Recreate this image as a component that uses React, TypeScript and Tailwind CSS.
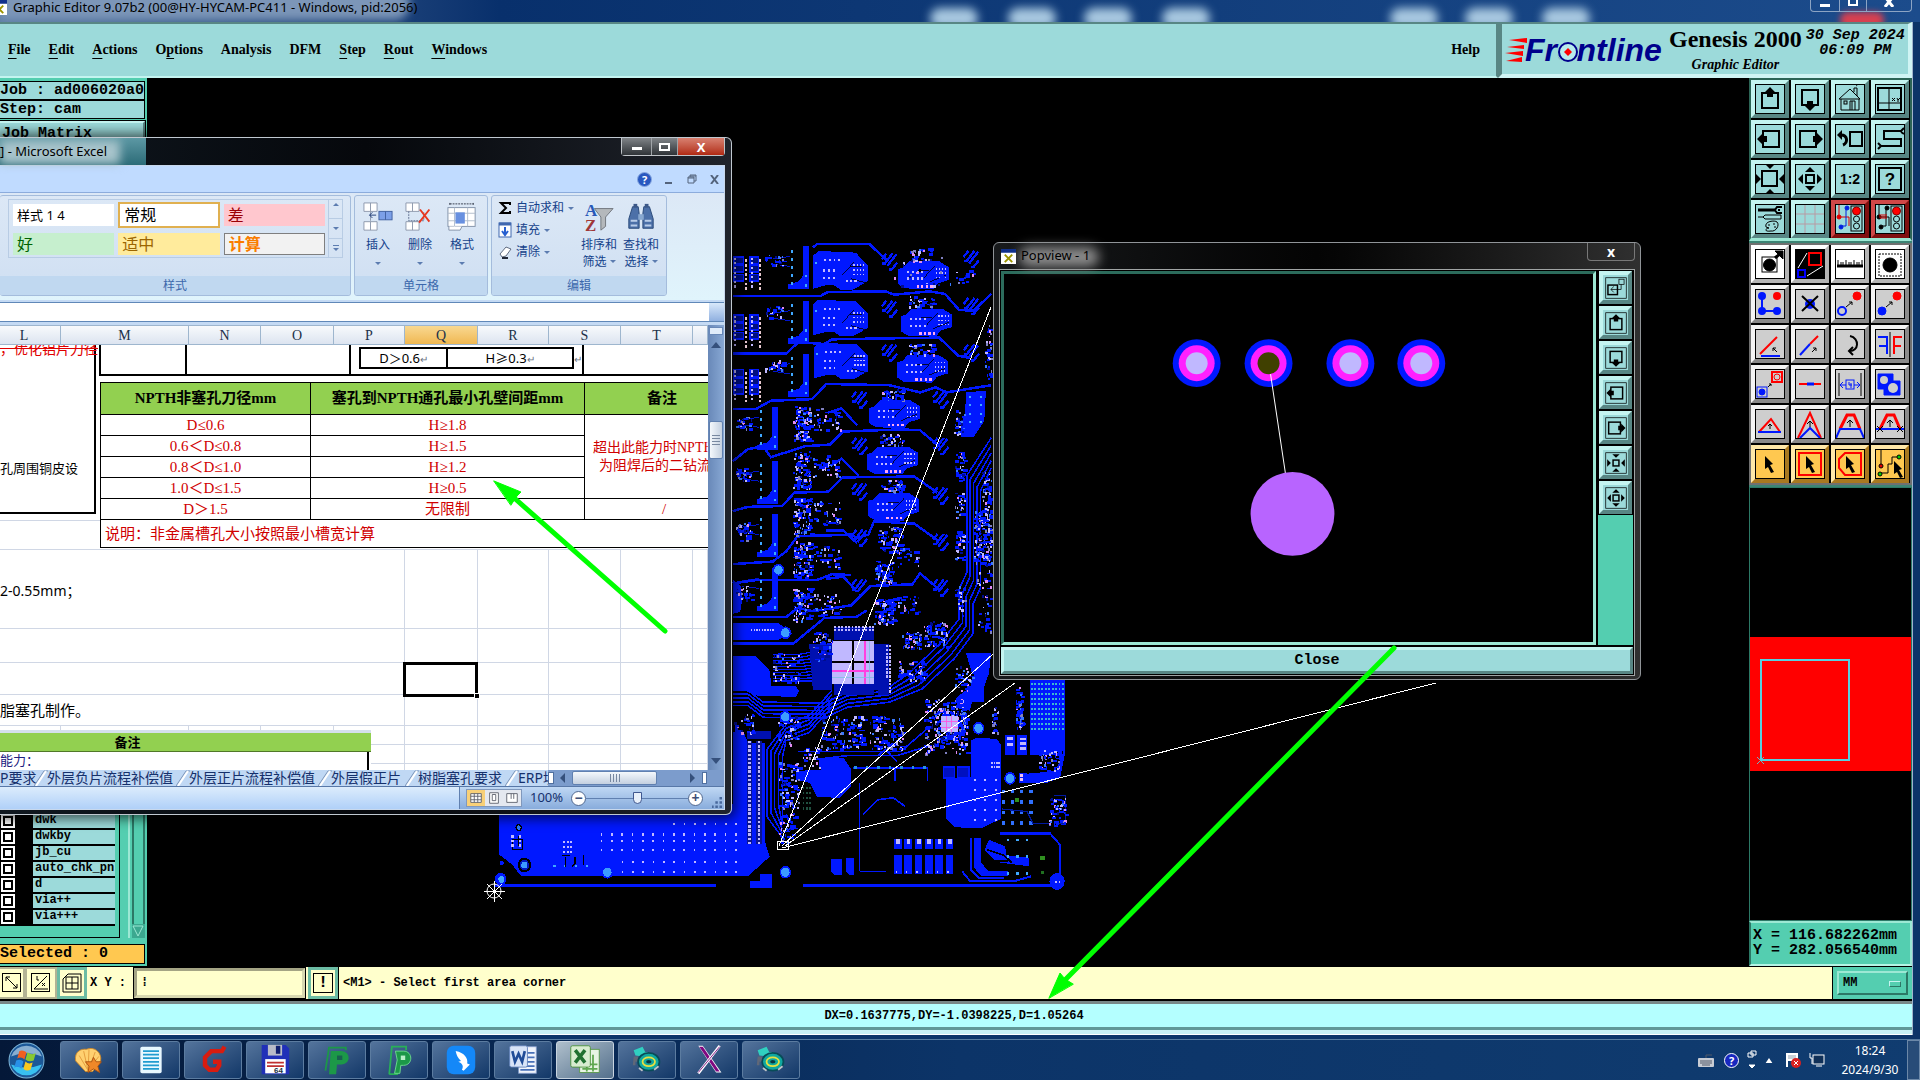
import { useState, type ReactNode } from 'react'

const mono = "font-['Liberation_Mono','Noto_Sans_CJK_SC',monospace] font-bold"
const serif = "font-['Liberation_Serif','Noto_Sans_CJK_SC',serif]"
const ui = "font-['Noto_Sans','Noto_Sans_CJK_SC',sans-serif]"

const BLUE = '#0018ff'
const LILAC = '#c0b8ff'
const SKY = '#40a8ff'

const raised = 'border-4 border-t-[#c4f4f0] border-l-[#c4f4f0] border-r-[#588684] border-b-[#588684] bg-[#9cdada]'
const raisedGray = 'border-4 border-t-[#f4f4f4] border-l-[#f4f4f4] border-r-[#8a8a8a] border-b-[#8a8a8a] bg-[#cecece]'
const raisedWhite = 'border-4 border-t-white border-l-white border-r-[#b4b4b4] border-b-[#b4b4b4] bg-white'
const raisedRed = 'border-4 border-t-[#d04848] border-l-[#d04848] border-r-[#801010] border-b-[#801010] bg-[#9cdada]'
const raisedGold = 'border-4 border-t-[#ffe8a8] border-l-[#ffe8a8] border-r-[#a87820] border-b-[#a87820] bg-[#ffc850]'

/* ---------- toolbar ---------- */

const UP = '0,-6 6,0 3,0 3,4 -3,4 -3,0 -6,0'
const TIP = '0,-4 5,1 -5,1'

function Arrow({ x, y, r = 0, tip }: { x: number; y: number; r?: number; tip?: boolean }) {
  return <polygon points={tip ? TIP : UP} transform={`translate(${x} ${y}) rotate(${r})`} fill="#000" stroke="none" />
}

function Pointer({ x, y }: { x: number; y: number }) {
  return <polygon points="0,0 8,8 5,9 9,16 6,17 3,11 0,13" transform={`translate(${x} ${y})`} fill="#000" stroke="none" />
}

function TrafficLight({ lamp, dot }: { lamp: string; dot: string }) {
  return (
    <>
      <path d="M4 0V13M4 13H14M14 13V22" stroke={lamp} />
      <path d="M11 5V22H7" stroke={dot} />
      <circle cx="12" cy="4" r="2" fill={dot} stroke={dot} /><circle cx="6" cy="23" r="2" fill={dot} stroke={dot} />
      <circle cx="4" cy="13" r="2" fill={lamp} stroke={lamp} />
      <rect x="16" y="2" width="11" height="25" />
      <circle cx="21.500" cy="7" r="4" fill="#f00" stroke="#800" /><circle cx="21.500" cy="15" r="3" /><circle cx="21.500" cy="22" r="3" />
    </>
  )
}

const tools: [string, string, ReactNode][] = [
  ['Pan up', raised, <><rect x="7" y="9" width="16" height="15" strokeWidth="2" /><Arrow x={15} y={9} /></>],
  ['Pan down', raised, <><rect x="7" y="6" width="16" height="15" strokeWidth="2" /><Arrow x={15} y={21} r={180} /></>],
  ['Home', raised, <><path d="M4 15 15 5 25 15ZM6 15V26H24V15M19 8V4H22V12M15 26V17H20V26M17 17V26" /><rect x="9" y="17" width="3" height="3" /><path d="M21 2 24 0" strokeDasharray="1 1" /></>],
  ['Layout', raised, <><rect x="3" y="4" width="23" height="22" strokeWidth="2" /><path d="M14 4V26M3 19H26M17 14 20 17M20 14 17 17M22 14 23 16 25 14M23 16V18" /></>],
  ['Pan left', raised, <><rect x="8" y="7" width="16" height="16" strokeWidth="2" /><Arrow x={8} y={15} r={-90} /></>],
  ['Pan right', raised, <><rect x="5" y="7" width="16" height="16" strokeWidth="2" /><Arrow x={22} y={15} r={90} /></>],
  ['Previous view', raised, <><rect x="15" y="8" width="12" height="14" strokeWidth="2" /><path d="M6 11C13 11 13 19 8 21" strokeWidth="3" /><Arrow x={6} y={11} r={-90} tip /></>],
  ['Serpentine', raised, <path d="M27 7H9V15H26V22H6M26 7 29 4M26 8 29 10M6 22 3 19M6 22 3 25" strokeWidth="2" />],
  ['Zoom in', raised, <><rect x="7" y="7" width="15" height="15" strokeWidth="2" /><Arrow x={15} y={1} r={180} tip /><Arrow x={15} y={29} tip /><Arrow x={2} y={15} r={90} tip /><Arrow x={28} y={15} r={-90} tip /></>],
  ['Zoom out', raised, <><rect x="11" y="11" width="8" height="8" strokeWidth="2" /><Arrow x={15} y={7} tip /><Arrow x={15} y={23} r={180} tip /><Arrow x={7} y={15} r={-90} tip /><Arrow x={23} y={15} r={90} tip /></>],
  ['Scale', raised, <text x="15" y="20" textAnchor="middle" fontSize="14" fontFamily="Liberation Sans" fontWeight="bold" fill="#000" stroke="none">1:2</text>],
  ['Query', raised, <><rect x="4" y="4" width="22" height="22" strokeWidth="2" /><text x="15" y="21" textAnchor="middle" fontSize="17" fontFamily="Liberation Sans" fontWeight="bold" fill="#000" stroke="none">?</text></>],
  ['Tools', raised, <><path d="M3 6H20" strokeWidth="3" /><path d="M27 3H22L20 6 22 9H27M24 5V7" strokeWidth="2" /><path d="M3 13H8L10 11H26V15H10L8 13" /><path d="M11 23C9 17 20 16 22 18 25 21 21 28 16 27 10 28 9 25 14 24Z" /><path d="M13 21H15M18 20H20M19 23H21" /></>],
  ['Grid', raised, <path d="M10 0V30M20 0V30M0 10H30M0 20H30" stroke="#b89aa4" />],
  ['Layer lights', raisedRed, <TrafficLight lamp="#e00000" dot="#0020e0" />],
  ['Net lights', raisedRed, <><TrafficLight lamp="#000" dot="#000" /><path d="M5 10V14H12M7 10V13M9 10V13M11 10V13" stroke="#e00000" /></>],
  ['Select feature', raisedWhite, <><rect x="7" y="8" width="15" height="15" /><circle cx="14.500" cy="16" r="6" fill="#000" /><path d="M20 9 26 4" strokeWidth="3" /><polygon points="20,2 28,2 28,10" fill="#000" /></>],
  ['Popview', raisedWhite, <><rect width="30" height="30" fill="#000" /><path d="M3 19 12 4M12 27 28 17" stroke="#fff" /><rect x="14" y="4" width="12" height="12" stroke="#f00" strokeWidth="2" /><rect x="3" y="21" width="7" height="7" stroke="#00f" strokeWidth="2" /></>],
  ['Ruler', raisedWhite, <><path d="M2 17H28" strokeWidth="3" /><path d="M3 11V18M6 13V18M8 13V18M11 11V18M14 13V18M16 13V18M19 11V18M22 13V18M24 13V18M27 11V18" /></>],
  ['Pad', raisedWhite, <><rect x="4" y="5" width="22" height="22" strokeDasharray="2 1" /><circle cx="15" cy="16" r="7" fill="#000" /></>],
  ['Net', raisedGray, <g fill={BLUE} stroke={BLUE} strokeWidth="2"><path d="M7 7V22H22" fill="none" /><circle cx="7" cy="7" r="3" /><circle cx="7" cy="22" r="3" /><circle cx="22" cy="22" r="3" /><circle cx="22" cy="7" r="3" fill="#f00" stroke="#f00" /></g>],
  ['Delete', raisedGray, <><circle cx="15" cy="15" r="5" fill={BLUE} stroke="none" /><path d="M7 7 23 22M23 7 7 22" strokeWidth="2" /></>],
  ['Move', raisedGray, <><circle cx="7" cy="22" r="4" stroke={BLUE} strokeWidth="2" /><circle cx="22" cy="7" r="4" fill="#f00" stroke="#f00" /><path d="M11 18 17 13M14 13H17V16" /></>],
  ['Copy', raisedGray, <><circle cx="7" cy="22" r="4" fill={BLUE} stroke={BLUE} /><circle cx="22" cy="7" r="4" fill="#f00" stroke="#f00" /><path d="M11 18 17 13M14 13H17V16" /></>],
  ['Rotate', raisedGray, <><path d="M5 25 22 8" stroke="#f00" strokeWidth="2" /><path d="M6 27H25" stroke={BLUE} strokeWidth="2" /><path d="M22 23 18 19M18 22V19H21" /></>],
  ['Stretch', raisedGray, <><path d="M15 15 23 7" stroke="#f00" strokeWidth="2" /><path d="M5 26 15 15" stroke={BLUE} strokeWidth="2" /><path d="M17 23 21 19M18 19H21V22" /></>],
  ['Turn', raisedGray, <><path d="M15 7C25 9 24 23 14 22" strokeWidth="2" /><path d="M18 18 14 22 18 26" strokeWidth="2" /></>],
  ['Mirror', raisedGray, <><path d="M15 3V28" /><path d="M3 8H12V25M12 17H4" stroke={BLUE} strokeWidth="2" /><path d="M27 8H19V25M19 17H26" stroke="#f00" strokeWidth="2" /></>],
  ['Resize', raisedGray, <><rect x="17" y="3" width="10" height="10" stroke="#f00" strokeWidth="2" /><circle cx="22" cy="8" r="3" stroke="#f00" /><rect x="2" y="18" width="10" height="10" stroke={BLUE} /><circle cx="7" cy="23" r="3" fill={BLUE} stroke={BLUE} /><path d="M13 18 16 15M14 15H16V17" /></>],
  ['Join', raisedGray, <><path d="M4 15H26" stroke="#f00" strokeWidth="2" /><path d="M12 15H19" stroke={BLUE} strokeWidth="3" /></>],
  ['Spacing', raisedGray, <><path d="M4 4V27M26 4V27" /><path d="M5 16H11M19 16H25M8 13 5 16 8 19M22 13 25 16 22 19" stroke={BLUE} /><rect x="11" y="11" width="8" height="9" stroke={BLUE} /><path d="M14 13V16H17M16 14V19" stroke={BLUE} /></>],
  ['Surface', raisedGray, <><path d="M3 5H18V12H25V26H9V20H3Z" fill={BLUE} stroke={BLUE} /><circle cx="9" cy="11" r="4" fill="#cecece" stroke="none" /><circle cx="18" cy="19" r="5" fill="#cecece" stroke="none" /></>],
  ['Chamfer', raisedGray, <><path d="M4 23 16 10 25 23" stroke="#f00" strokeWidth="2" /><path d="M3 23H26" stroke={BLUE} strokeWidth="2" /><path d="M15 20V15M13 17 15 15 17 17" /></>],
  ['Peak', raisedGray, <><path d="M3 29 15 4 26 29" stroke="#f00" strokeWidth="2" /><path d="M5 29 15 19 25 29" stroke={BLUE} strokeWidth="2" /><path d="M15 18V12M12 15 15 12 18 15" /></>],
  ['Trapeze', raisedGray, <><path d="M5 20 12 6H19L25 20" stroke="#f00" strokeWidth="3" /><path d="M1 29 5 20H25L29 29" stroke={BLUE} strokeWidth="2" /><path d="M15 18V11M12 14 15 11 18 14" /></>],
  ['Trapeze cut', raisedGray, <><path d="M5 20 12 6H19L25 20" stroke="#f00" strokeWidth="3" /><path d="M1 20H29" stroke={BLUE} strokeWidth="2" /><path d="M2 17 8 23M8 17 2 23M22 17 28 23M28 17 22 23" /><path d="M15 18V11M12 14 15 11 18 14" /></>],
  ['Pick', raisedGold, <Pointer x={10} y={7} />],
  ['Pick in box', raisedGold, <><rect x="4" y="4" width="22" height="22" stroke="#f00" strokeWidth="2" /><Pointer x={11} y={7} /></>],
  ['Pick in polygon', raisedGold, <><path d="M10 4H26V26H10L4 19V10Z" stroke="#f00" strokeWidth="2" /><Pointer x={11} y={7} /></>],
  ['Pick net', raisedGold, <><path d="M6 0V16M6 24H13V15H17V8H22" /><circle cx="6" cy="17" r="2" fill="#e00000" /><circle cx="5" cy="25" r="2" fill="#0c0" /><circle cx="24" cy="8" r="2" fill="#0c0" /><Pointer x={19} y={12} /></>],
]

function ToolButton({ name, look, children }: { name: string; look: string; children: ReactNode }) {
  return (
    <button aria-label={name} className={`size-[38px] ${look}`}>
      <svg viewBox="0 0 30 30" className="size-[30px]" fill="none" stroke="#000">
        {children}
        <rect x="0.500" y="0.500" width="29" height="29" stroke="#000" />
      </svg>
    </button>
  )
}

function RightPanel() {
  return (
    <aside className="flex w-[163px] shrink-0 flex-col bg-[#3c8474]">
      <div className="grid grid-cols-[repeat(4,38px)] gap-[2px] border-2 border-b-[3px] border-[#2c6456] border-b-[#9ce8d4] bg-black">
        {tools.slice(0, 16).map(([n, look, icon]) => <ToolButton key={n} name={n} look={look}>{icon}</ToolButton>)}
      </div>
      <div className="mt-[2px] grid grid-cols-[repeat(4,38px)] gap-[2px] border-2 border-[#707070] bg-black">
        {tools.slice(16).map(([n, look, icon]) => <ToolButton key={n} name={n} look={look}>{icon}</ToolButton>)}
      </div>
      <div className="mt-[2px] flex min-h-0 flex-1 flex-col border border-[#2c7866] bg-black">
        <div className="flex-1" />
        <div className="h-[134px] bg-[#ff0000] px-[10px] pt-[22px]">
          <div className="h-[102px] w-[90px] border-2 border-[#58d0e0]" />
          <svg viewBox="0 0 8 8" className="-mt-1 -ml-[3px] size-[7px]" stroke="#58d0e0"><path d="M0 0 8 8M8 0 0 8" /></svg>
        </div>
        <div className="flex-1" />
      </div>
      <div className={`h-[45px] border-2 border-t-[#9ce8d4] border-l-[#2c7866] border-r-[#9ce8d4] border-b-[#b4f4e4] bg-[#54ceb0] pt-[5px] pl-[2px] text-[15px] leading-[15px] whitespace-pre ${mono}`}>
        <p>X = 116.682262mm</p>
        <p>Y = 282.056540mm</p>
      </div>
    </aside>
  )
}

/* ---------- board artwork ---------- */

function randomizer(seed: number) {
  let s = seed
  return () => {
    s = (s * 1664525 + 1013904223) % 4294967296
    return s / 4294967296
  }
}

// x, y, width, height, pad count
const clusters: number[][] = [
  [745, 35, 45, 25, 28], [745, 155, 45, 30, 28], [745, 285, 45, 25, 28],
  [1120, 20, 60, 30, 40], [1120, 132, 65, 28, 40], [1120, 245, 65, 28, 40], [1045, 355, 60, 24, 40], [1045, 462, 60, 26, 40], [1045, 570, 60, 28, 40], [1040, 680, 60, 60, 80],
  [818, 392, 45, 85, 110], [818, 500, 45, 90, 110], [818, 612, 45, 90, 110], [818, 715, 45, 85, 110], [818, 825, 45, 80, 100],
  [870, 400, 70, 55, 40], [870, 510, 70, 55, 40], [870, 620, 70, 55, 40], [870, 725, 70, 55, 40], [870, 840, 70, 50, 40],
  [1030, 760, 50, 55, 80], [1030, 850, 50, 62, 90], [1090, 730, 55, 50, 30], [1090, 845, 55, 40, 30],
  [1240, 400, 25, 60, 30], [1240, 500, 25, 70, 40], [1240, 600, 25, 60, 30], [1240, 690, 25, 70, 40], [1240, 820, 25, 70, 30],
  [1290, 640, 46, 130, 190], [1310, 550, 26, 90, 50], [1300, 780, 35, 150, 50], [1320, 200, 16, 130, 40], [1240, 70, 50, 30, 14],
  [668, 415, 40, 35, 30], [668, 540, 40, 35, 30], [668, 670, 40, 45, 34], [668, 820, 40, 35, 30], [665, 1120, 50, 50, 34],
  [870, 930, 50, 70, 60], [1100, 930, 50, 40, 60], [1160, 905, 60, 60, 80], [1090, 1000, 70, 45, 70], [765, 980, 70, 70, 50],
  [890, 1130, 110, 80, 130], [1015, 1130, 90, 80, 120], [1160, 1090, 110, 130, 190], [1185, 1110, 85, 75, 190],
  [780, 1130, 50, 70, 50], [780, 1240, 50, 110, 100], [780, 1360, 40, 70, 50], [1400, 1060, 16, 100, 50], [1335, 1100, 16, 70, 20],
  [1460, 1210, 60, 50, 50], [1485, 1320, 45, 70, 60], [1240, 1010, 50, 60, 40], [1080, 30, 150, 80, 20], [840, 1205, 50, 50, 30],
]

function Specks() {
  const rnd = randomizer(41)
  const tint = [BLUE, BLUE, BLUE, BLUE, '#000c90', '#000', LILAC, LILAC, '#3878ff', '#e08cf0', '#8080c0', BLUE]
  return (
    <>
      {clusters.flatMap(([x, y, w, h, n], c) =>
        Array.from({ length: n }, (_, i) => {
          const fill = tint[Math.floor(rnd() * tint.length)]
          const long = fill === BLUE ? 12 : 4
          return (
            <rect
              key={`${c}-${i}`}
              x={Math.round(x + rnd() * w)}
              y={Math.round(y + rnd() * h)}
              width={3 + Math.round(rnd() * long)}
              height={4 + Math.round(rnd() * 3)}
              fill={fill}
            />
          )
        }),
      )}
    </>
  )
}

function Dots({ x, y, cols, rows, dx, dy, s = 5, fill = LILAC }: { x: number; y: number; cols: number; rows: number; dx: number; dy: number; s?: number; fill?: string }) {
  return (
    <>
      {Array.from({ length: cols * rows }, (_, i) => (
        <rect key={i} x={x + (i % cols) * dx} y={y + Math.floor(i / cols) * dy} width={s} height={s} fill={fill} />
      ))}
    </>
  )
}

function PourA({ x, y, sy = 1 }: { x: number; y: number; sy?: number }) {
  return (
    <g transform={`translate(${x} ${y}) scale(1 ${sy})`}>
      <polygon points="0,12 14,0 112,4 143,34 143,72 105,92 72,92 56,82 32,82 0,90" fill={BLUE} />
      <path d="M76 58 108 26M100 66 140 76M96 38H128" stroke="#000" strokeWidth="2" fill="none" />
      <Dots x={30} y={20} cols={4} rows={1} dx={12} dy={10} />
      <Dots x={26} y={44} cols={3} rows={2} dx={13} dy={18} />
      <Dots x={106} y={32} cols={4} rows={3} dx={8} dy={11} s={4} />
      <Dots x={86} y={68} cols={3} rows={1} dx={11} dy={9} s={6} />
      <rect x="5" y="26" width="6" height="6" fill={SKY} />
    </g>
  )
}

function PourB({ x, y }: { x: number; y: number }) {
  return (
    <g transform={`translate(${x} ${y})`}>
      <polygon points="0,20 14,16 28,2 108,2 133,16 133,46 104,54 92,68 18,66 0,56" fill={BLUE} />
      <path d="M66 42 96 12M84 50 126 34M52 24H80" stroke="#000" strokeWidth="2" fill="none" />
      <Dots x={24} y={24} cols={4} rows={2} dx={12} dy={16} />
      <Dots x={98} y={18} cols={4} rows={3} dx={8} dy={10} s={4} />
      <Dots x={48} y={58} cols={4} rows={1} dx={12} dy={9} s={6} fill="#ffa8f0" />
    </g>
  )
}

function Tower({ x, y }: { x: number; y: number }) {
  return (
    <g transform={`translate(${x} ${y})`}>
      <polygon points="38,0 54,0 54,102 0,102 0,90 26,84 38,70" fill={BLUE} />
      <Dots x={6} y={8} cols={1} rows={5} dx={1} dy={19} s={7} fill={SKY} />
      <Dots x={43} y={68} cols={1} rows={2} dx={1} dy={22} s={6} fill={SKY} />
      <path d="M-40 30 4 24M-40 42 4 48" stroke={BLUE} strokeWidth="2" />
    </g>
  )
}

function Whisker({ x, y }: { x: number; y: number }) {
  return (
    <path
      d={`M${x} ${y + 16}l12 -14M${x} ${y + 26}h8l20 -24M${x + 14} ${y + 32}l24 -28M${x + 18} ${y + 40}h8l14 -16`}
      stroke={BLUE}
      strokeWidth="6"
      fill="none"
    />
  )
}

const traces = [
  'M660 133H890L908 124 1035 122H1060L1082 130 1175 122 1215 128 1252 166 1290 168 1336 128',
  'M660 270H800L832 243 900 247 920 236 1110 233 1200 232 1250 275 1280 280',
  'M660 402H720L760 382 868 378 905 342 1070 345 1150 362 1190 350 1220 362 1336 345',
  'M660 526 700 497 740 490 760 516 850 490 915 486 948 455 1100 450 1150 452 1205 494',
  'M660 644 700 634 790 632 822 600 910 598 948 564 1135 562 1195 600',
  'M660 770 765 764 800 740 830 704 970 700 985 708 1015 700 1030 668 1135 674 1200 716',
  'M660 816 720 808 880 808 920 794 970 796M660 896H800L830 874 870 882 970 868 1020 822 1130 818 1150 792 1200 830',
  'M660 958H820L900 898 985 895 1010 880',
  'M870 18 880 10H1018L1065 50M910 410 945 400 985 440M910 540 945 520 990 560M905 690 950 690 985 720M905 805 950 800 985 836',
]

function Board() {
  return (
    <svg viewBox="0 0 1568 1568" preserveAspectRatio="none" className="absolute top-[162px] left-[333px] h-[660px] w-[600px]" shapeRendering="crispEdges">
      {traces.map((d) => <path key={d} d={d} stroke={BLUE} strokeWidth="6" fill="none" />)}
      {[0, 9, 18, 27, 36].map((o) => (
        <path
          key={o}
          d={`M1336 ${470 + o * 2} ${1272 + o} ${560 + o}V${790 + o}L${1252 + o} ${830 + o}V${900 + o}L${1202 + o} ${960 + o} ${1120 + o} ${1030 + o} 1070 ${1062 + o} 960 ${1074 + o} 900 ${1100 + o} 740 ${1098 + o} 700 ${1070 + o} 660 ${1070 + o}`}
          stroke={BLUE}
          strokeWidth="4"
          fill="none"
        />
      ))}
      {[0, 10, 20, 30, 40].map((o) => (
        <path key={o} d={`M920 ${1070 + o} 860 ${1130 + o} 800 ${1150 + o} ${750 + o} ${1210 + o / 2}V${1370 - o}L790 ${1420 - o}`} stroke={BLUE} strokeWidth="4" fill="none" />
      ))}
      <path d="M830 1215H1100L1170 1160M870 1235 960 1225H1090L1180 1200M1040 1225 1060 1210 1090 1240M975 1254H1170M1085 1254V1285M1170 1254V1285M992 1290V1500M1000 1365 1040 1330 1080 1325 1110 1345M992 1500 1060 1500" stroke={BLUE} strokeWidth="4" fill="none" />

      {[40, 178, 308].map((y) => (
        <g key={y}>
          {[0, 20, 42].map((dy) => <path key={dy} d={`M664 ${y + dy}h24v16h-24zM706 ${y + dy}h22v16h-22z`} fill="#001080" stroke={BLUE} strokeWidth="4" />)}
          <Dots x={664} y={y + 2} cols={2} rows={7} dx={44} dy={11} />
          <Dots x={692} y={y + 6} cols={2} rows={7} dx={36} dy={11} s={6} fill="#e8c8d0" />
        </g>
      ))}

      <Tower x={806} y={15} /><Tower x={806} y={144} /><Tower x={806} y={270} />
      <Tower x={725} y={397} /><Tower x={725} y={525} /><Tower x={725} y={652} /><Tower x={725} y={780} />
      <PourA x={870} y={26} /><PourA x={870} y={142} sy={0.94} /><PourA x={872} y={244} sy={0.94} />
      <PourB x={1093} y={49} /><PourB x={1100} y={161} /><PourB x={1090} y={271} /><PourB x={1017} y={379} /><PourB x={1011} y={489} /><PourB x={1014} y={600} />

      {[30, 142, 246].map((y) => <Whisker key={y} x={1050} y={y} />)}
      {[24, 136, 246].map((y) => <Whisker key={y} x={1264} y={y} />)}
      {[358, 468, 576, 686, 804].map((y) => <Whisker key={y} x={972} y={y} />)}
      {[358, 468, 586, 696, 804].map((y) => <Whisker key={y} x={1184} y={y} />)}

      <polygon points="1270,362 1322,358 1318,430 1290,468 1256,468 1258,440 1268,410" fill={BLUE} />
      <Dots x={1278} y={370} cols={2} rows={4} dx={28} dy={20} fill={SKY} />
      <polygon points="660,910 780,910 815,935 780,950 660,950" fill={BLUE} />
      <Dots x={708} y={924} cols={9} rows={1} dx={7} dy={7} s={4} />
      <polygon points="660,988 720,988 756,1020 762,1060 826,1060 834,1072 826,1086 720,1082 690,1070 660,1070" fill={BLUE} />
      <polygon points="660,806 680,820 686,850 680,884 660,888" fill={BLUE} />

      {/* main processor */}
      {[0, 1, 2, 3, 4, 5, 6, 7, 8, 9].map((i) => <path key={i} d={`M765 ${985 + i * 7}H${830 + i * 3}L${890} ${975 + i * 8}H920`} stroke={BLUE} strokeWidth="3" fill="none" />)}
      <path d="M860 960H920V1070H870ZM925 920H1030V950H925ZM1030 960H1070V1070H1030ZM925 1055H1030V1080H925Z" fill="#0010b0" />
      <Dots x={926} y={916} cols={12} rows={2} dx={9} dy={9} />
      <Dots x={1060} y={962} cols={2} rows={13} dx={8} dy={9} s={6} />
      <rect x="921" y="953" width="108" height="102" fill={LILAC} />
      <path d="M974 953V1055M921 1002H1029" stroke="#000" strokeWidth="5" />
      <path d="M1006 953V1055M921 1024H1029" stroke="#ff40e0" strokeWidth="3" />
      <path d="M1018 953V1055M921 1040H1029" stroke="#80c0e0" strokeWidth="2" />
      <rect x="1040" y="1040" width="30" height="40" fill="#0010b0" />

      {/* lower area */}
      <polygon points="50,1340 660,1340 660,1170 690,1170 700,1195 745,1195 745,1430 757,1465 700,1512 108,1512 84,1484 50,1460" fill={BLUE} />
      <path d="M697 1166H760V1186H697Z" fill="#0010b0" />
      <path d="M697 1190H712V1436H697ZM722 1190H737V1436H722Z" fill="#0a1490" />
      <Dots x={701} y={1190} cols={2} rows={25} dx={26} dy={10} s={6} />
      <Dots x={315} y={1410} cols={14} rows={1} dx={27} dy={20} />
      <Dots x={315} y={1426} cols={14} rows={2} dx={27} dy={20} />
      <Dots x={370} y={1475} cols={12} rows={2} dx={27} dy={24} />
      <Dots x={505} y={1384} cols={7} rows={1} dx={27} dy={24} />
      <path d="M86 1424H112V1448H86ZM100 1416V1440" stroke="#000" strokeWidth="3" fill="none" />
      <Dots x={82} y={1414} cols={2} rows={3} dx={20} dy={11} s={6} />
      <Dots x={218} y={1428} cols={3} rows={3} dx={9} dy={12} s={5} />
      <Dots x={192} y={1484} cols={4} rows={1} dx={28} dy={12} s={6} fill={SKY} />
      <path d="M215 1462H235M224 1466V1490M248 1466V1482L240 1488M270 1462V1486" stroke="#000" strokeWidth="4" fill="none" />
      <path d="M40 1533H618M845 1533H1500" stroke={BLUE} strokeWidth="8" />
      <path d="M705 1524H732V1507H763V1540H705Z" fill={BLUE} />

      <polygon points="885,1232 950,1230 970,1258 970,1298 940,1326 880,1322 862,1290 826,1282 826,1262 885,1258" fill={BLUE} />
      <polygon points="1282,1190 1295,1183 1350,1185 1362,1200 1362,1375 1310,1398 1240,1395 1218,1375 1218,1280 1282,1275" fill={BLUE} />
      <Dots x={1290} y={1280} cols={3} rows={5} dx={28} dy={24} />
      <Dots x={1336} y={1240} cols={4} rows={2} dx={6} dy={9} />
      <path d="M1212 1252H1240V1278H1212ZM1248 1252H1278V1278H1248Z" fill="#0010c0" stroke={BLUE} strokeWidth="3" />
      <polygon points="1270,982 1336,980 1330,1030 1318,1060 1318,1098 1286,1098 1280,1118 1244,1112 1244,1088 1284,1060 1286,1030" fill={BLUE} />
      <path d="M1437 1046H1530V1216H1500V1224H1437V1168Z" fill={BLUE} />
      <Dots x={1440} y={1052} cols={10} rows={10} dx={9} dy={12} s={5} fill="#3cb8d0" />
      <path d="M1372 1176H1398V1224H1372ZM1404 1176H1430V1224H1404ZM1408 1266H1430V1290H1408ZM1430 1268 1500 1262 1516 1240V1215H1530L1516 1278 1480 1290H1430Z" fill={BLUE} />
      <Dots x={1378} y={1180} cols={2} rows={2} dx={8} dy={14} s={7} />
      <Dots x={1412} y={1182} cols={2} rows={3} dx={8} dy={11} s={7} />
      <Dots x={1410} y={1268} cols={1} rows={2} dx={8} dy={10} s={8} fill="#f0c0f0" />
      <Dots x={1364} y={1306} cols={4} rows={4} dx={24} dy={25} s={8} fill="#3070ff" />
      <rect x="1398" y="1326" width="11" height="9" fill="#309020" />
      <path d="M1364 1352 1430 1358 1445 1386H1530V1320H1500" stroke="#0018a0" strokeWidth="3" fill="none" />

      {[0, 1, 2, 3, 4, 5].map((i) => (
        <g key={i} transform={`translate(${1082 + i * 27} 1424)`}>
          <rect width="20" height="22" fill={BLUE} /><rect x="6" width="10" height="12" fill={LILAC} />
          <rect y="38" width="20" height="44" fill={BLUE} />
          <rect x="4" y="76" width="4" height="4" fill={LILAC} />
        </g>
      ))}
      <path d="M918 1470H945V1508H925L918 1500ZM956 1468H978V1508H965L956 1500Z" fill={BLUE} />
      <path d="M1283 1420V1496L1305 1516H1370M1360 1410H1490L1515 1436V1510L1500 1533M1260 1500 1280 1522H1400L1440 1512" stroke={BLUE} strokeWidth="5" fill="none" />
      <path d="M1290 1420V1490L1310 1512H1380V1500H1330L1310 1480V1420ZM1330 1425 1372 1440 1376 1462 1436 1468V1488L1350 1478 1318 1450Z" fill={BLUE} />
      <path d="M1324 1448 1370 1462 1390 1480M1320 1476H1380" stroke="#000" strokeWidth="4" fill="none" />
      <circle cx="1508" cy="1524" r="20" fill={BLUE} />
      <Dots x={1503} y={1522} cols={2} rows={1} dx={9} dy={8} />
      <rect x="1463" y="1463" width="14" height="10" fill="#309020" /><rect x="1465" y="1500" width="8" height="7" fill="#207020" />
      <Dots x={1376} y={1422} cols={3} rows={3} dx={25} dy={40} s={7} fill={SKY} />
      <Dots x={843} y={1300} cols={3} rows={5} dx={9} dy={12} s={5} fill="#205040" />
      <Dots x={978} y={1250} cols={7} rows={1} dx={30} dy={12} s={7} fill="#2890e0" />

      <Specks />
      <rect x="1206" y="1130" width="42" height="40" fill={LILAC} />
      <path d="M1218 1130V1170M1232 1130V1170M1206 1144H1248M1206 1158H1248" stroke="#ff50e0" strokeWidth="2" />

      {[[798, 933], [798, 1133], [780, 784], [798, 1502], [333, 1502], [1303, 1160], [1385, 1279]].map(([x, y]) => (
        <g key={`${x}-${y}`}><circle cx={x} cy={y} r="15" fill={BLUE} /><circle cx={x} cy={y} r="11" fill="#3c9cff" /></g>
      ))}
      <circle cx="116" cy="1485" r="15" fill="#0018c0" stroke="#000" strokeWidth="5" /><circle cx="116" cy="1485" r="8" fill="#3c9cff" />
      <circle cx="101" cy="1396" r="7" fill="#2878ff" stroke="#000" strokeWidth="3" />
      <circle cx="57" cy="1480" r="7" fill={BLUE} stroke="#000" strokeWidth="3" />
      <circle cx="54" cy="1518" r="15" fill={BLUE} /><circle cx="56" cy="1519" r="8" fill={SKY} />
    </svg>
  )
}

function Canvas() {
  return (
    <main className="relative min-w-0 flex-1 bg-black">
      <Board />
      <svg className="absolute top-0 left-0 size-full" stroke="#fff" fill="none" shapeRendering="crispEdges">
        <path d="M632 768 844 229M635 768 846 576M638 768 868 605M635 770 1289 605" />
        <rect x="630" y="763" width="11" height="8" />
        <path d="M337 813H358M347 803V824M340 806 355 821M355 806 340 821" />
        <circle cx="347" cy="813" r="7" shapeRendering="auto" />
      </svg>
    </main>
  )
}

/* ---------- left panel ---------- */

const layers = ['dwk', 'dwkby', 'jb_cu', 'auto_chk_pnl', 'd', 'via++', 'via+++']

function LeftPanel() {
  return (
    <aside className={`flex w-[147px] shrink-0 flex-col bg-[#54ceb0] text-[15px] ${mono}`}>
      <div className="mt-[3px] mr-[2px] h-[19px] border border-l-0 border-black bg-[#9cdada] leading-[18px] whitespace-pre">Job : ad006020a0</div>
      <div className="mr-[2px] h-[19px] border border-l-0 border-black bg-[#9cdada] leading-[18px]">Step: cam</div>
      <button className="mt-[2px] mr-[2px] h-6 border-2 border-t-[#c4f4f0] border-l-0 border-r-[#588684] border-b-[#588684] bg-[#9cdada] pl-[2px] text-left leading-[22px] outline outline-black">Job Matrix</button>
      <div className="flex min-h-0 flex-1">
        <div className="flex w-[120px] flex-col justify-end border-r border-b border-black pb-[11px]">
          <div className="mr-1 flex flex-1 flex-col justify-end bg-black pb-px">
            {layers.map((name) => (
              <label key={name} className="flex h-4 items-center text-[12px]">
                <input type="checkbox" className="ml-px size-[14px] appearance-none border-[3px] border-white bg-white outline-2 -outline-offset-4 outline-black" />
                <span className="ml-[18px] h-[14px] w-[82px] overflow-hidden bg-[#9cdada] pl-[2px] leading-[13px]">{name}</span>
              </label>
            ))}
          </div>
        </div>
        <div className="ml-[5px] w-[5px] border-r-2 border-[#9ce8d4]" />
        <div className="ml-[2px] flex w-[13px] flex-col">
          <div className="flex-1 border-x-2 border-[#2c7866] bg-[#54ceb0]" />
          <button aria-label="Scroll down" className="h-[14px] bg-[#3ca890]">
            <svg viewBox="0 0 12 12" className="size-3" fill="none" stroke="#9ce8d4"><path d="M1 1H11L6 11Z" /></svg>
          </button>
        </div>
      </div>
      <div className="mt-[6px] mr-[2px] mb-[2px] h-5 border border-l-0 border-black bg-[#ffc850] leading-[18px] whitespace-pre">Selected : 0</div>
    </aside>
  )
}

/* ---------- header ---------- */

const menus: [string, number][] = [['File', 0], ['Edit', 0], ['Actions', 0], ['Options', 1], ['Analysis', -1], ['DFM', -1], ['Step', 0], ['Rout', 0], ['Windows', 0]]

function FrontlineLogo() {
  return (
    <svg viewBox="0 0 160 30" className="h-[30px] w-[160px]">
      <g fill="#f00">
        <polygon points="4,4 22,2 22,7" /><polygon points="2,11 19,9 19,13" /><polygon points="0,17 18,15 18,20" /><polygon points="1,25 17,21 17,26" />
      </g>
      <text x="20" y="25" fontSize="32" fontFamily="Liberation Sans" fontWeight="bold" fontStyle="italic" fill="#00008c">Frontline</text>
      <circle cx="63" cy="16" r="11" fill="#9cdada" />
      <circle cx="63" cy="16" r="9" fill="#b8ecec" stroke="#00008c" strokeWidth="2" />
      <polygon points="63,12 67,16 63,20 59,16" fill="#f00" />
    </svg>
  )
}

function Header() {
  return (
    <header className={`flex h-14 shrink-0 bg-[#9cdada] font-bold ${serif}`}>
      <nav className="flex min-w-0 flex-1 items-center gap-[18px] border-2 border-l-0 border-t-[#588684] border-r-[#588684] border-b-[#c4f4f0] pl-2 text-[14px]">
        {menus.map(([name, key]) => (
          <button key={name} className="pb-[2px]">
            {key < 0 ? name : <>{name.slice(0, key)}<span className="underline underline-offset-4">{name[key]}</span>{name.slice(key + 1)}</>}
          </button>
        ))}
        <button className="mr-4 ml-auto pb-[2px]">Help</button>
      </nav>
      <div className="flex w-[414px] items-start border-4 border-t-2 border-t-[#588684] border-l-[#588684] border-r-[#d0f4f4] border-b-[#d0f4f4] pt-1">
        <div className="mt-2 ml-[3px]"><FrontlineLogo /></div>
        <div className="ml-1 text-center">
          <p className="text-[24px] leading-[22px] whitespace-nowrap">Genesis 2000</p>
          <p className="mt-2 text-[14px] leading-[14px] italic">Graphic Editor</p>
        </div>
        <div className={`ml-1 text-center text-[15px] leading-[15px] whitespace-nowrap italic ${mono}`}>
          <p>30 Sep 2024</p>
          <p>06:09 PM</p>
        </div>
      </div>
    </header>
  )
}

function XIcon() {
  return (
    <svg viewBox="0 0 16 16" className="size-[15px]">
      <rect width="16" height="16" fill="#fff" /><rect width="16" height="4" fill="#10308c" />
      <path d="M4 6 12 14M12 6 4 14" stroke="#9c9400" strokeWidth="2" />
    </svg>
  )
}

function TitleBar() {
  return (
    <div className={`relative flex h-[22px] shrink-0 overflow-hidden bg-linear-to-r from-[#5c7ca4] from-0% via-[#08306c] via-[26%] to-[#1c4c8c] text-[13px] ${ui}`}>
      {[930, 1008, 1084, 1162, 1390, 1465, 1542].map((x) => (
        <span key={x} className="absolute top-2 h-5 w-12 rounded-full bg-[#a8c8e0] blur-[5px]" style={{ left: x }} />
      ))}
      <span className="absolute top-3 right-9 h-4 w-11 rounded-full bg-[#d84050] blur-[3px]" />
      <span className="absolute -top-3 left-0 h-8 w-[410px] rounded-r-full bg-[#7c96b8] blur-[4px]" />
      <span className="relative -ml-2"><XIcon /></span>
      <span className="relative ml-[6px] leading-[14px] text-black">Graphic Editor 9.07b2 (00@HY-HYCAM-PC411 - Windows, pid:2056)</span>
      <div className="relative mr-2 ml-auto flex h-3 rounded-b border border-t-0 border-[#8ca4c4] font-bold text-white">
        <button aria-label="Minimize" className="flex w-7 items-center justify-center"><span className="h-[3px] w-[10px] bg-white" /></button>
        <button aria-label="Maximize" className="flex w-7 items-start justify-center border-x border-[#8ca4c4]"><span className="h-[6px] w-[10px] border-2 border-t-0 border-white" /></button>
        <button aria-label="Close" className="flex w-11 items-start justify-center"><svg viewBox="0 0 10 7" className="h-[7px] w-[10px]" stroke="#fff" strokeWidth="3"><path d="M2 -2 9 7M8 -2 1 7" /></svg></button>
      </div>
    </div>
  )
}

/* ---------- spreadsheet window ---------- */

function Caret() {
  return <span className="inline-block border-x-[3px] border-t-[3px] border-x-transparent border-t-[#5c7cb0]" />
}

function RibbonGroup({ label, className, children }: { label: string; className: string; children: ReactNode }) {
  return (
    <section className={`flex flex-col overflow-hidden rounded-[3px] border border-[#a4bcdc] bg-linear-to-b from-[#dce8f6] to-[#cfdff2] ${className}`}>
      <div className="flex flex-1">{children}</div>
      <h3 className="h-[19px] bg-[#c0d8f0] text-center text-[12px] leading-[19px] text-[#3c68ac]">{label}</h3>
    </section>
  )
}

function BigButton({ lines, icon }: { lines: string[]; icon: ReactNode }) {
  return (
    <button className="flex w-[42px] flex-col items-center text-[12px] leading-[17px] whitespace-nowrap text-[#15428b]">
      <svg viewBox="0 0 32 32" className="mb-1 size-[30px]" fill="none">{icon}</svg>
      <span>{lines[0]}</span>
      {lines[1] ? <span className="flex items-center gap-[3px]">{lines[1]}<Caret /></span> : <span className="mt-[6px] leading-[3px]"><Caret /></span>}
    </button>
  )
}

const cellsAt = (y: number) => <path d={`M1 ${y}H15V${y + 9}H1ZM8 ${y}V${y + 9}`} fill="#fff" stroke="#8c98ac" />

function Ribbon() {
  return (
    <div className="flex h-[108px] gap-[3px] border-t border-[#8cacdc] bg-linear-to-b from-[#dce8f6] to-[#e0f4fc] pt-[2px] pb-1">
      <RibbonGroup label="样式" className="w-[351px] border-l-0">
        <div className="mt-[3px] ml-2 flex h-[59px] w-[335px] border border-[#b8cce4]">
          <div className="grid flex-1 grid-cols-3 gap-1 py-[2px] pr-[3px] pl-1 text-[16px] leading-[20px]">
            <button className="mt-[2px] h-[22px] bg-white pl-1 text-left text-[13px]">样式 1 4</button>
            <button className="h-[26px] border-2 border-[#e0b050] bg-white pl-1 text-left">常规</button>
            <button className="mt-[2px] h-[22px] bg-[#ffc7ce] pl-1 text-left text-[#9c0006]">差</button>
            <button className="h-[22px] bg-[#c6efce] pl-1 text-left text-[#006100]">好</button>
            <button className="h-[22px] bg-[#ffeb9c] pl-1 text-left text-[#9c6500]">适中</button>
            <button className="h-[22px] border border-[#7f7f7f] bg-[#f2f2f2] pl-1 text-left font-bold text-[#fa7d00]">计算</button>
          </div>
          <div className="flex w-[14px] flex-col border-l border-[#b8cce4]">
            <button aria-label="Previous styles" className="flex flex-1 items-center justify-center"><span className="rotate-180 leading-none"><Caret /></span></button>
            <button aria-label="Next styles" className="flex flex-1 items-center justify-center border-y border-[#b8cce4] leading-none"><Caret /></button>
            <button aria-label="More styles" className="flex flex-1 flex-col items-center justify-center gap-[2px] leading-none"><span className="h-px w-[6px] bg-[#5c7cb0]" /><Caret /></button>
          </div>
        </div>
      </RibbonGroup>
      <RibbonGroup label="单元格" className="w-[134px]">
        <div className="flex pt-[6px] pl-[2px]">
          <BigButton lines={['插入']} icon={<>{cellsAt(1)}{cellsAt(21)}<path d="M8 10V20" stroke="#8c98ac" /><rect x="17" y="10" width="14" height="9" fill="#7ca0e8" stroke="#4060a0" /><path d="M24 10V19" stroke="#4060a0" /><path d="M14 14H7M10 11 7 14 10 17" stroke="#203c78" /></>} />
          <BigButton lines={['删除']} icon={<>{cellsAt(1)}{cellsAt(21)}<path d="M4 10V20H20V10" stroke="#607090" strokeDasharray="2 1" /><path d="M16 8 26 21M26 8 15 22" stroke="#e83820" strokeWidth="2" /></>} />
          <BigButton lines={['格式']} icon={<><path d="M3 1V4M3 2H28M28 1V4" stroke="#303848" strokeDasharray="2 1" /><rect x="1" y="6" width="29" height="20" fill="#fff" stroke="#8090a8" /><path d="M1 12H30M1 20H30M8 6V30M22 6V26" stroke="#b0bccc" /><rect x="9" y="11" width="10" height="12" fill="#6890e0" /><path d="M2 26V30H14L16 26" fill="#fff" stroke="#8090a8" /></>} />
        </div>
      </RibbonGroup>
      <RibbonGroup label="编辑" className="w-[176px]">
        <div className="flex w-[86px] shrink-0 flex-col gap-1 pt-[3px] pl-[6px] text-[12px] leading-[18px] whitespace-nowrap text-[#15428b]">
          <button className="flex items-center gap-[4px]">
            <svg viewBox="0 0 14 16" className="h-4 w-[14px]" fill="none" stroke="#000" strokeWidth="2"><path d="M12 5V3H3L8 8 3 13H12V11" /></svg>
            自动求和<Caret />
          </button>
          <button className="flex items-center gap-[4px]">
            <svg viewBox="0 0 14 16" className="h-4 w-[14px]"><rect x="1" y="1" width="12" height="14" fill="#fff" stroke="#4068b0" /><path d="M1 2H13" stroke="#4068b0" strokeWidth="3" /><path d="M7 5V12M4 9 7 13 10 9" stroke="#2860d0" strokeWidth="2" fill="none" /></svg>
            填充<Caret />
          </button>
          <button className="flex items-center gap-[4px]">
            <svg viewBox="0 0 14 14" className="size-[14px]"><path d="M2 9 8 2 13 4 8 11 4 12Z" fill="#fff" stroke="#606c80" /><path d="M4 13H10" stroke="#202838" strokeWidth="2" /></svg>
            清除<Caret />
          </button>
        </div>
        <div className="flex pt-[6px]">
          <BigButton lines={['排序和', '筛选']} icon={<><text x="1" y="15" fontSize="18" fontFamily="Liberation Serif" fontWeight="bold" fill="#2858b8">A</text><text x="1" y="31" fontSize="18" fontFamily="Liberation Serif" fontWeight="bold" fill="#a03838">Z</text><path d="M11 7H31L23 16V26L18 30V16Z" fill="#b4b8bc" stroke="#70747c" /></>} />
          <BigButton lines={['查找和', '选择']} icon={<><path d="M7 5H13L14 12V28H3V18ZM25 5H19L18 12V28H29V18Z" fill="#4c70a8" stroke="#284878" /><rect x="13" y="13" width="6" height="6" fill="#88a8d0" /><path d="M5 20H12M20 20H27M5 25H12M20 25H27" stroke="#b8cce8" strokeWidth="2" /><rect x="8" y="2" width="4" height="4" fill="#3c5888" /><rect x="20" y="2" width="4" height="4" fill="#3c5888" /></>} />
        </div>
      </RibbonGroup>
    </div>
  )
}

const grid = 'border-r border-b border-[#d0d7e5] shrink-0'

const specRows = [
  ['D≤0.6', 'H≥1.8'],
  ['0.6＜D≤0.8', 'H≥1.5'],
  ['0.8＜D≤1.0', 'H≥1.2'],
  ['1.0＜D≤1.5', 'H≥0.5'],
]

function SpecTable() {
  return (
    <table className={`absolute top-[37px] left-[100px] w-[740px] table-fixed border-collapse border border-black bg-white text-center text-[15px] text-[#d00000] ${serif}`}>
      <colgroup><col className="w-[210px]" /><col className="w-[274px]" /><col /></colgroup>
      <thead>
        <tr className="h-8 bg-[#92d050] text-black [&>th]:border [&>th]:border-black">
          <th>NPTH非塞孔刀径mm</th>
          <th>塞孔到NPTH通孔最小孔壁间距mm</th>
          <th><span className="mr-[100px]">备注</span></th>
        </tr>
      </thead>
      <tbody className="[&_td]:border [&_td]:border-black [&_td]:p-0 [&_td]:leading-[18px]">
        {specRows.map(([d, h], i) => (
          <tr key={d} className="h-[21px]">
            <td>{d}</td>
            <td>{h}</td>
            {i === 0 && (
              <td rowSpan={4} className="text-left text-[14px] whitespace-nowrap">
                <p className="pl-2">超出此能力时NPTH孔</p>
                <p className="pl-[14px]">为阻焊后的二钻流</p>
              </td>
            )}
          </tr>
        ))}
        <tr className="h-[21px]"><td>D＞1.5</td><td>无限制</td><td><span className="mr-[96px]">/</span></td></tr>
        <tr className="h-7"><td colSpan={3} className="text-left"><span className="pl-1">说明：非金属槽孔大小按照最小槽宽计算</span></td></tr>
      </tbody>
    </table>
  )
}

const plainRows = [
  { h: 'h-[79px]', text: '2-0.55mm；', cls: 'pt-[34px] text-[14px] leading-[14px]' },
  { h: 'h-[34px]', text: '', cls: '' },
  { h: 'h-8', text: '', cls: '' },
  { h: 'h-[31px]', text: '脂塞孔制作。', cls: 'text-[15px] leading-[31px]' },
]

function Sheet() {
  return (
    <div className="relative h-[425px] flex-1 overflow-hidden bg-white">
      {/* bordered cells above the pasted table */}
      <div className="flex h-[175px] text-[13px]">
        <div className="h-[169px] w-[96px] shrink-0 border-r-2 border-b-2 border-black">
          <p className="-mt-[6px] text-[14px] leading-[20px] whitespace-nowrap text-[#e00000] line-through">，优化铝片刀径</p>
          <p className="mt-[99px] leading-[20px] whitespace-nowrap">孔周围铜皮设</p>
        </div>
        <div className="ml-[3px] flex h-[31px] flex-1 border-b-2 border-l-2 border-black">
          <div className="w-[86px] border-r-2 border-black" />
          <div className="w-[164px] border-r-2 border-black" />
          <div className="flex w-[233px] border-r-2 border-black pl-2">
            <div className="mt-[2px] h-[22px] w-[90px] border-2 border-black text-center leading-[18px]">D＞0.6<span className="text-[10px] text-gray-500">↵</span></div>
            <div className="mt-[2px] h-[22px] w-[127px] border-2 border-l-0 border-black text-center leading-[18px]">H≥0.3<span className="text-[10px] text-gray-500">↵</span></div>
            <span className="text-[10px] leading-[28px] text-gray-500">↵</span>
          </div>
        </div>
      </div>
      <div className="h-[30px] border-y border-[#d0d7e5]" />
      {plainRows.map((r, i) => (
        <div key={i} className={`flex ${r.h}`}>
          <div className={`w-[405px] ${grid} ${r.cls}`}>{r.text}</div>
          <div className={`w-[73px] ${grid}`} /><div className={`w-[71px] ${grid}`} /><div className={`w-[72px] ${grid}`} /><div className={`w-[72px] ${grid}`} /><div className={`flex-1 ${grid}`} />
        </div>
      ))}
      {['h-[19px]', 'h-[19px]', 'h-[10px]'].map((h, i) => (
        <div key={i} className={`flex ${h}`}>
          <div className={`w-[61px] ${grid}`} /><div className={`w-[128px] ${grid}`} /><div className={`w-[72px] ${grid}`} /><div className={`w-[73px] ${grid}`} /><div className={`w-[71px] ${grid}`} />
          <div className={`w-[73px] ${grid}`} /><div className={`w-[71px] ${grid}`} /><div className={`w-[72px] ${grid}`} /><div className={`w-[72px] ${grid}`} /><div className={`flex-1 ${grid}`} />
        </div>
      ))}
      <SpecTable />
      <div className="absolute top-[317px] left-[403px] h-[35px] w-[75px] border-[3px] border-black" />
      <span className="absolute top-[348px] left-[474px] size-[6px] border border-white bg-black" />
      <div className="absolute top-[385px] left-0 w-[371px] border-t-[3px] border-[#d4e0ec] bg-white">
        <p className="h-[19px] border-b border-[#507828] bg-[#92d050] pr-[116px] text-center text-[13px] leading-[18px] font-bold">备注</p>
        <p className="mr-[2px] h-5 border-r-2 border-black text-[13px] leading-[17px] text-[#202080]">能力：</p>
      </div>
    </div>
  )
}

const columns: [string, string][] = [['L', 'w-[61px] pr-3'], ['M', 'w-[128px]'], ['N', 'w-[72px]'], ['O', 'w-[73px]'], ['P', 'w-[71px]'], ['Q', 'w-[73px]'], ['R', 'w-[71px]'], ['S', 'w-[72px]'], ['T', 'w-[72px]'], ['', 'flex-1']]

const sheetTabs: [string, string][] = [['P要求', 'w-[40px]'], ['外层负片流程补偿值', 'w-[142px]'], ['外层正片流程补偿值', 'w-[142px]'], ['外层假正片', 'w-[87px]'], ['树脂塞孔要求', 'w-[100px]'], ['ERP填', 'w-[37px]']]

function Excel() {
  const [zoom, setZoom] = useState(50)
  return (
    <section className={`absolute top-[137px] left-0 w-[732px] overflow-hidden rounded-tr-md rounded-br-md border border-l-0 border-[#c0c8d0] bg-linear-to-r from-[#101820] via-[#06080c] to-[#20242c] shadow-[0_0_12px_4px_rgba(0,0,0,0.6)] ${ui}`}>
      <div className="relative flex h-[27px] text-[13px]">
        <span className="absolute top-0 left-0 h-[27px] w-[146px] bg-linear-to-b from-[#5c98a4] to-[#2c6c78]" />
        <span className="absolute top-[2px] left-0 h-6 w-[120px] bg-[#a8c4cc] blur-[5px]" />
        <h2 className="relative leading-[27px] text-black">] - Microsoft Excel</h2>
        <div className="relative mr-[6px] ml-auto flex h-[18px] rounded-b-[4px] border border-t-0 border-[#c0c4c8] text-white">
          <button aria-label="Minimize" className="flex w-[29px] items-end justify-center bg-linear-to-b from-[#808488] to-[#303438] pb-[5px]"><span className="h-[3px] w-[10px] bg-white" /></button>
          <button aria-label="Maximize" className="flex w-[27px] items-center justify-center border-x border-[#a0a4a8] bg-linear-to-b from-[#808488] to-[#303438]"><span className="h-2 w-[11px] border-2 border-white" /></button>
          <button className="w-[46px] bg-linear-to-b from-[#d88070] to-[#b02810] leading-[14px] font-bold">X</button>
        </div>
      </div>
      <div className="mr-[6px] mb-1 border border-l-0 border-[#c8d8ec] bg-[#c0dbff]">
        <div className="flex h-[26px] items-center justify-end gap-[13px] pr-[5px] text-[#54647c]">
          <button aria-label="Help" className="size-[15px] rounded-full border border-[#88a8e0] bg-[#2858c0] text-[11px] leading-[13px] font-bold text-white">?</button>
          <button aria-label="Minimize workbook" className="flex h-3 w-[9px] items-end pb-px"><span className="h-[2px] w-[7px] bg-[#54647c]" /></button>
          <button aria-label="Restore workbook" className="size-[10px]"><svg viewBox="0 0 10 10" fill="none" stroke="#54647c"><path d="M3 3V1H9V7H7M1 3H7V9H1ZM1 4H7M3 2H9" /></svg></button>
          <button aria-label="Close workbook" className="size-[9px]"><svg viewBox="0 0 9 9" stroke="#54647c" strokeWidth="2"><path d="M1 0 8 9M8 0 1 9" /></svg></button>
        </div>
        <Ribbon />
        <div className="h-[25px] bg-[#c4daf4] pt-[2px]">
          <div className="flex h-5 border-y border-[#6088b8] bg-white"><span className="ml-auto w-[15px] bg-linear-to-b from-[#d8e8fa] to-[#90b0e0]" /></div>
        </div>
        <div className="flex">
          <div className="min-w-0 flex-1">
            <div className={`flex h-5 border-y border-[#9eb6ce] bg-linear-to-b from-[#f8fafc] to-[#dce4f0] text-center text-[14px] leading-[20px] text-[#203048] ${serif}`}>
              {columns.map(([name, w]) => (
                <div key={name} className={`shrink-0 border-r border-[#9eb6ce] ${w} ${name === 'Q' ? 'bg-linear-to-b from-[#f8d890] to-[#f0b850]' : ''}`}>{name}</div>
              ))}
            </div>
            <Sheet />
          </div>
          <div className="flex w-4 flex-col items-center bg-linear-to-r from-[#6888b8] to-[#88a8d4]">
            <span className="mt-[2px] h-2 w-[14px] border border-[#6888b8] bg-[#e0ecfa]" />
            <svg viewBox="0 0 10 6" className="mt-[7px] h-[6px] w-[10px]"><path d="M0 6 5 0 10 6Z" fill="#35507c" /></svg>
            <div className="mt-[73px] flex h-[38px] w-[14px] flex-col items-center justify-center gap-[2px] rounded-[2px] border border-[#6080b0] bg-linear-to-r from-[#f4f8fc] to-[#c4d0e0]">
              {[0, 1, 2, 3].map((i) => <span key={i} className="h-px w-2 bg-[#7888a0]" />)}
            </div>
            <svg viewBox="0 0 10 6" className="mt-auto mb-[6px] h-[6px] w-[10px]"><path d="M0 0 5 6 10 0Z" fill="#35507c" /></svg>
          </div>
        </div>
        <div className="flex h-4 bg-[#7c9ccc] text-[14px] leading-[16px] text-[#15306c]">
          <div className="flex w-[548px] overflow-hidden bg-[#c0d8f4] whitespace-nowrap">
            {sheetTabs.map(([t, w], i) => (
              <button key={t} className={`relative shrink-0 text-left ${w} ${i ? 'pl-[7px]' : ''}`}>
                {i > 0 && <svg viewBox="0 0 14 16" className="absolute top-0 -left-[6px] h-4 w-[14px]" fill="none"><path d="M0 16 10 1H14" stroke="#7c94b8" /><path d="M2 16 12 1" stroke="#fff" strokeWidth="2" /></svg>}
                {t}
              </button>
            ))}
          </div>
          <span className="mt-[2px] h-3 w-[6px] border border-[#5070a0] bg-white" />
          <div className="flex flex-1 items-center justify-between pr-[7px] pl-[6px]">
            <svg viewBox="0 0 5 10" className="h-[10px] w-[5px]"><path d="M5 0V10L0 5Z" fill="#35507c" /></svg>
            <div className="mr-auto ml-[7px] flex h-[14px] w-[85px] items-center justify-center gap-[2px] rounded-[2px] border border-[#6080b0] bg-linear-to-b from-[#f4f8fc] to-[#c4d0e0]">
              {[0, 1, 2, 3].map((i) => <span key={i} className="h-2 w-px bg-[#7888a0]" />)}
            </div>
            <svg viewBox="0 0 5 10" className="h-[10px] w-[5px]"><path d="M0 0V10L5 5Z" fill="#35507c" /></svg>
          </div>
          <span className="mt-[2px] mr-[17px] h-3 w-[5px] border border-[#5070a0] bg-white" />
        </div>
        <div className="flex h-[23px] border-t border-[#5878a8] bg-linear-to-b from-[#dcecfc] to-[#b0d0f8]">
          <div className="ml-[459px] flex flex-1 items-center border-l border-[#6080b0] bg-linear-to-b from-[#c0d8f4] to-[#88acdc] pl-[6px]">
            <div className="flex h-[18px] w-14 shrink-0 border border-[#8098bc] bg-[#e4e8f0]">
              {['M2 3H14V13H2ZM2 6H14M2 10H14M6 3V13M10 3V13', 'M3 2H13V14H3ZM6 4H10V11H6Z', 'M2 3H14V13H2ZM7 3V9M10 3V9'].map((d, i) => (
                <button key={d} aria-label={['Normal view', 'Page layout', 'Page break preview'][i]} className={`w-[18px] ${i ? '' : 'bg-[#f8d078]'}`}>
                  <svg viewBox="0 0 16 16" className="mx-auto size-[14px]" fill="#fff" stroke="#585c68"><path d={d} /></svg>
                </button>
              ))}
            </div>
            <span className="ml-2 text-[13px] text-[#15306c]">100%</span>
            <button aria-label="Zoom out" className="ml-[8px] size-[15px] shrink-0 rounded-full border border-[#506890] bg-white text-[14px] leading-[12px] font-bold text-[#405078]">−</button>
            <input aria-label="Zoom" type="range" value={zoom} onChange={(e) => setZoom(Number(e.target.value))} className="h-4 w-[102px] shrink-0 appearance-none bg-[linear-gradient(#6080b0,#6080b0)] bg-[length:100%_1px] bg-center bg-no-repeat [&::-webkit-slider-thumb]:h-3 [&::-webkit-slider-thumb]:w-[9px] [&::-webkit-slider-thumb]:appearance-none [&::-webkit-slider-thumb]:rounded-b-full [&::-webkit-slider-thumb]:border [&::-webkit-slider-thumb]:border-[#405890] [&::-webkit-slider-thumb]:bg-[#e8f0fa]" />
            <button aria-label="Zoom in" className="size-[15px] shrink-0 rounded-full border border-[#506890] bg-white text-[14px] leading-[12px] font-bold text-[#405078]">+</button>
            <svg viewBox="0 0 12 13" className="mt-2 mr-[2px] ml-auto h-[11px] w-[10px]" fill="#48689c"><path d="M9 0h3v3H9ZM9 5h3v3H9ZM9 10h3v3H9ZM4 5h3v3H4ZM4 10h3v3H4ZM0 10h2v3H0Z" /></svg>
          </div>
        </div>
      </div>
    </section>
  )
}

/* ---------- popview ---------- */

const popTools: [string, ReactNode][] = [
  ['Detach', <><rect x="4" y="11" width="13" height="13" strokeWidth="2" /><rect x="19" y="3" width="7" height="7" /><path d="M22 10V17H8M12 13 8 17 12 21" /></>],
  ...[0, 1, 4, 5].map((i): [string, ReactNode] => [tools[i][0], tools[i][2]]),
  ['Zoom in', <><rect x="11" y="11" width="8" height="8" strokeWidth="2" /><Arrow x={15} y={4} r={180} tip /><Arrow x={15} y={26} tip /><Arrow x={4} y={15} r={90} tip /><Arrow x={26} y={15} r={-90} tip /></>],
  ['Zoom out', tools[9][2]],
]

function Popview() {
  return (
    <section className="absolute top-[242px] left-[993px] w-[648px] rounded-md border border-[#909498] bg-linear-to-r from-[#181a1c] via-[#040404] to-[#303030] px-[5px] pb-[3px]">
      <div className={`relative flex h-[26px] items-center text-[13px] text-black ${ui}`}>
        <span className="absolute top-1 left-5 h-5 w-20 rounded-full bg-[#8c8c8c] blur-[6px]" />
        <span className="relative ml-[2px]"><XIcon /></span>
        <h2 className="relative ml-[5px]">Popview - 1</h2>
        <button className="relative mb-auto ml-auto h-[18px] w-12 rounded-b border border-t-0 border-[#787878] text-[14px] leading-[14px] font-bold text-white">x</button>
      </div>
      <div className="border border-[#a0a4a4] bg-black p-px">
        <div className="flex">
          <div className="h-[374px] min-w-0 flex-1 border-[3px] border-t-[#2c6c5c] border-l-[#2c6c5c] border-r-[#9ce8d4] border-b-[#9ce8d4] bg-black">
            <svg className="size-full" viewBox="0 0 590 368">
              {[193, 265, 347, 418].map((x, i) => (
                <g key={x} transform={`translate(${x} 89)`}>
                  <circle r="24" fill={BLUE} /><circle r="18" fill="#ff20ff" /><circle r="11" fill={i === 1 ? '#404000' : LILAC} />
                </g>
              ))}
              <path d="M267 100 282 200" stroke="#fff" />
              <circle cx="289" cy="240" r="42" fill="#b864ff" />
            </svg>
          </div>
          <div className="ml-[2px] flex w-[35px] flex-col gap-[2px] bg-[#54ceb0]">
            {popTools.map(([n, icon]) => (
              <button key={n} aria-label={n} className={`mx-auto size-[33px] outline outline-black ${raised}`}>
                <svg viewBox="0 0 30 30" className="mx-auto size-[22px]" fill="none" stroke="#000">{icon}<rect x="1" y="1" width="28" height="28" /></svg>
              </button>
            ))}
          </div>
        </div>
        <button className={`mt-[2px] h-[27px] w-full border-[3px] border-t-[#c4f4f0] border-l-[#c4f4f0] border-r-[#588684] border-b-[#588684] bg-[#9cdada] text-[15px] leading-[20px] ${mono}`}>Close</button>
      </div>
    </section>
  )
}

/* ---------- bottom bars ---------- */

function CommandBar() {
  const sq = 'flex h-8 items-center justify-center border-2'
  return (
    <div className={`flex h-[33px] shrink-0 border-t border-black bg-[#ffffcc] text-[12px] ${mono}`}>
      <button aria-label="Snap diagonal" className={`w-[25px] border-l-0 border-[#b4b494] ${sq}`}>
        <svg viewBox="0 0 20 20" className="size-5" fill="none" stroke="#000"><rect x="0.500" y="0.500" width="18" height="18" /><path d="M4 4 15 15M4 8V4H8M11 15H15V11" /></svg>
      </button>
      <button aria-label="Snap angle" className={`w-8 border-[#b4b494] ${sq}`}>
        <svg viewBox="0 0 20 20" className="size-5" fill="none" stroke="#000"><rect x="0.500" y="0.500" width="18" height="18" /><path d="M3 16 16 3M3 16H17M6 3V7H8M11 10 14 13M14 10 11 13" /></svg>
      </button>
      <button aria-label="Grid" className={`w-[30px] border-[3px] border-[#6cbca4] ${sq}`}>
        <svg viewBox="0 0 20 20" className="size-5" fill="none" stroke="#000"><path d="M1 6 6 1H19V19H1ZM10 4V16M4 10H16" /><rect x="4" y="4" width="12" height="12" /></svg>
      </button>
      <label htmlFor="xy" className="w-[47px] pl-[3px] leading-8 whitespace-pre">X Y :</label>
      <input id="xy" className="my-px w-[171px] border-[3px] border-t-[#a4a484] border-l-[#a4a484] border-r-[#d8d8b0] border-b-[#d8d8b0] bg-[#ffffcc] px-1 outline outline-black" defaultValue="⁞" />
      <button className={`ml-[3px] w-[30px] border-[3px] border-[#6cbca4] ${sq}`}><span className="size-5 border border-black text-[16px] leading-[18px]">!</span></button>
      <p className="flex-1 border-l border-black pl-1 leading-8">&lt;M1&gt; - Select first area corner</p>
      <div className="relative w-[80px] border-l border-black bg-[#54ceb0] p-1">
        <select aria-label="Units" className="size-full appearance-none border-2 border-t-[#9ce8d4] border-l-[#9ce8d4] border-r-[#2c7866] border-b-[#2c7866] pl-1 leading-[18px]">
          <option>MM</option>
        </select>
        <span className="pointer-events-none absolute top-[14px] right-[11px] h-[6px] w-3 border border-t-[#c4f4f0] border-l-[#c4f4f0] border-r-[#2c7866] border-b-[#2c7866]" />
      </div>
    </div>
  )
}

const P_BOWL = 'M11 8H22C34 8 34 23 23 23H18L17 34H9Z'

const apps: [string, ReactNode][] = [
  ['Shell', <><path d="M14 31 3 19C1 8 10 5 15 6 24 2 33 10 31 19L22 31Z" fill="#ffd070" stroke="#d08828" /><path d="M17 30 7 13M17 30 12 8M17 30 18 6M17 30 25 9M17 30 29 14" stroke="#e09838" /><path d="M23 15 26 20 32 20 28 25 30 32 23 28 17 32 18 25 14 20 21 20Z" fill="#f08828" stroke="#a85010" /></>],
  ['Notes', <><rect x="6" y="3" width="24" height="30" rx="2" fill="#e8f8ff" /><path d="M9 8H27M9 12H27M9 16H27M9 20H27M9 24H27M9 28H27" stroke="#209cd0" strokeWidth="2" /></>],
  ['G', <path d="M31 3 28 8H16L9 15V24L14 29H22L25 24V20H18" stroke="#d81c10" strokeWidth="5" />],
  ['Disk', <><path d="M3 1H30L34 5V34H3Z" fill="#2030b8" /><rect x="10" y="1" width="16" height="12" fill="#b8bcc8" /><rect x="19" y="2" width="5" height="9" fill="#102070" /><rect x="7" y="17" width="23" height="16" fill="#fff" /><path d="M9 21H28M9 25H28" stroke="#c03030" strokeWidth="2" /><text x="17" y="33" fontSize="9" fontFamily="Liberation Sans" fontWeight="bold" fill="#203040">64</text></>],
  ['P1', <><path d="M5 30 9 4H28V7" stroke="#1c9848" strokeWidth="2" /><path d={P_BOWL} fill="#1c9848" /><path d="M18 13H24V18H18Z" fill="#186050" /></>],
  ['P2', <><path d="M7 34 10 3H26V7M7 34H17" stroke="#28b058" strokeWidth="2" /><path d="M14 8H23C34 8 34 24 23 24H20L19 33H13L16 18Z" fill="#1c9848" stroke="#70e090" /><path d="M20 13H25V18H20Z" fill="#b8f0c8" /></>],
  ['Bird', <><rect x="2" y="2" width="32" height="32" rx="8" fill="#1488f8" /><path d="M12 8C22 10 26 16 25 22L28 23 21 30 19 29C22 24 18 21 15 20L18 19C14 16 13 12 12 8Z" fill="#fff" /></>],
  ['Word', <><path d="M13 3H33V33H13Z" fill="#f0f4fc" stroke="#8098c8" /><path d="M22 10H31M22 15H31M22 20H31M15 25H31M15 29H31" stroke="#4870b8" strokeWidth="2" /><rect x="3" y="2" width="20" height="24" rx="2" fill="#d8e4f8" stroke="#6080b8" /><path d="M6 8 9 20 13 11 17 20 20 8" stroke="#204c98" strokeWidth="3" /></>],
  ['Excel', <><rect x="12" y="6" width="22" height="26" fill="#e8f4e4" stroke="#589848" /><path d="M15 23H32M15 28H32M20 20V31M27 12V31" stroke="#60a850" strokeWidth="2" /><rect x="2" y="2" width="22" height="24" rx="2" fill="#d8ecd0" stroke="#489038" /><path d="M7 7 18 21M18 7 7 21" stroke="#207030" strokeWidth="4" /></>],
  ['Disc', 0],
  ['X', <><path d="M6 2H11L32 32H26Z" fill="#fff" /><path d="M7 3H11L30 31H26Z" fill="#800880" /><path d="M30 2 6 33" stroke="#fff" strokeWidth="3" /><path d="M30 3 6 32" stroke="#800880" /></>],
  ['Disc 2', 0],
]

const disc = <><path d="M3 7 13 3 16 9 22 9 14 14 5 13Z" fill="#30d0c0" /><path d="M3 14H8V20H5V24H2" fill="#606878" /><ellipse cx="20" cy="20" rx="12" ry="10" fill="#10a8a0" stroke="#084c58" strokeWidth="2" /><ellipse cx="20" cy="20" rx="7" ry="5" stroke="#e8e040" strokeWidth="2" /><ellipse cx="20" cy="20" rx="3" ry="2" fill="#083840" /><path d="M9 27 13 30M26 29 31 25" stroke="#c0c4c8" strokeWidth="2" /></>

function Taskbar() {
  return (
    <footer className={`flex h-[41px] shrink-0 items-center border-t border-[#587ca0] bg-linear-to-r from-[#041838] via-[#0c3468] to-[#103c70] ${ui}`}>
      <button aria-label="Start" className="mr-[15px] ml-2">
        <svg viewBox="0 0 36 36" className="size-[37px]">
          <circle cx="18" cy="18" r="17" fill="#1c5898" stroke="#7cb4d8" /><path d="M3 22A16 16 0 0 0 33 22Q18 28 3 22Z" fill="#38c0f0" /><path d="M3 14A16 16 0 0 1 33 14Q18 8 3 14Z" fill="#88aed0" />
          <path d="M11 9Q14 7 18 10L16 17Q13 14 9 16Z" fill="#f06020" /><path d="M19 10Q23 13 27 11L25 18Q21 20 17 17Z" fill="#88c830" /><path d="M8 18Q12 16 15 19L13 26Q10 23 6 25Z" fill="#2890e8" /><path d="M17 19Q20 22 24 20L22 27Q18 29 15 26Z" fill="#f8c820" />
        </svg>
      </button>
      <div className="flex gap-1">
        {apps.map(([name, icon]) => (
          <button key={name} aria-label={name} className={`flex h-[38px] w-[58px] items-center justify-center rounded-[3px] border ${name === 'Excel' ? 'border-[#c8d4e0] bg-linear-to-br from-[#b0c0cc] to-[#54708c]' : 'border-[#5c7ca0] bg-linear-to-br from-[#54749c] to-[#123868]'}`}>
            <svg viewBox="0 0 36 36" className="size-8" fill="none">{icon || disc}</svg>
          </button>
        ))}
      </div>
      <div className="ml-auto flex items-center gap-2 text-white">
        <svg viewBox="0 0 18 14" className="h-[14px] w-[18px]"><rect y="5" width="16" height="9" rx="1" fill="#c8ccd4" /><path d="M2 8H14M2 10H14M4 12H12M8 5V2H14" stroke="#505868" fill="none" /></svg>
        <span className="size-[15px] rounded-full border border-white bg-[#1828c0] text-center text-[11px] leading-[13px] font-bold">?</span>
        <svg viewBox="0 0 10 20" className="h-5 w-[10px]" fill="none" stroke="#fff"><path d="M4 1H9V5H4ZM1 3H6V7H1Z" /><path d="M2 15H8L5 18Z" fill="#fff" /></svg>
        <svg viewBox="0 0 8 6" className="h-[5px] w-2"><path d="M0 6 4 0 8 6Z" fill="#fff" /></svg>
        <svg viewBox="0 0 16 16" className="ml-1 size-4"><path d="M2 1V15M2 2H12V8H2" stroke="#fff" strokeWidth="2" fill="#c8d0d8" /><circle cx="11" cy="11" r="5" fill="#d82020" /><path d="M9 9 13 13M13 9 9 13" stroke="#fff" /></svg>
        <svg viewBox="0 0 16 16" className="size-4" fill="none" stroke="#fff"><rect x="4" y="3" width="11" height="9" fill="#103058" /><path d="M7 14H13M1 1V6H3V12" /></svg>
        <div className="ml-1 w-[66px] text-center text-[12px] leading-[19px] whitespace-nowrap">
          <p>18:24</p>
          <p>2024/9/30</p>
        </div>
        <button aria-label="Show desktop" className="-ml-1 h-10 w-[13px] border border-[#6c88a8] bg-[#284c78]" />
      </div>
    </footer>
  )
}

export default function App() {
  return (
    <div className="relative flex h-screen flex-col overflow-hidden bg-[#0c3468] text-black">
      <TitleBar />
      <div className="mr-[7px] flex min-h-0 flex-1 flex-col border-r border-[#a0b4cc] bg-black">
        <Header />
        <div className="flex min-h-0 flex-1">
          <LeftPanel />
          <Canvas />
          <RightPanel />
        </div>
        <CommandBar />
        <div className={`mt-[2px] flex h-[29px] shrink-0 items-center justify-center border-y-[3px] border-t-[#788888] border-b-[#609898] bg-[#b4ffff] text-[12px] ${mono}`}>
          <p className="pr-1">DX=0.1637775,DY=-1.0398225,D=1.05264</p>
        </div>
        <div className="h-[5px] shrink-0 border-b border-white bg-[#c8f0f4]" />
      </div>
      <div className="h-[4px] shrink-0" />
      <Taskbar />
      <Excel />
      <Popview />
      <svg className="pointer-events-none absolute top-0 left-0 size-full" stroke="#00ff00" fill="#00ff00" strokeWidth="5" strokeLinecap="round">
        <path d="M665 631 512 496M1394 648 1064 981" />
        <path d="M494 481 521 492 517 496 511 505ZM1049 998 1060 973 1065 979 1073 984Z" strokeWidth="1" />
      </svg>
    </div>
  )
}
